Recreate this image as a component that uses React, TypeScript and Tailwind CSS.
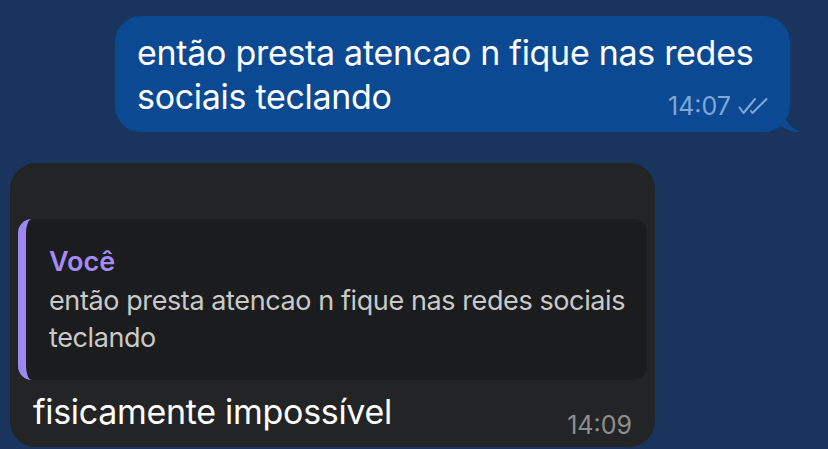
import React from 'react';

function DoubleCheck() {
  return (
    <svg width="30" height="18" viewBox="0 0 30 18" fill="none" stroke="#7fa6d8" strokeWidth="2" strokeLinecap="round" strokeLinejoin="round">
      <path d="M1.5 10.5 L5.5 16 L17 2" />
      <path d="M13 14 L14.5 16 L28.5 2" />
    </svg>
  );
}

export default function App() {
  return (
    <div className="w-[828px] h-[449px] overflow-hidden bg-[#1a355d] font-['Inter','Liberation_Sans',sans-serif] flex flex-col">
      {/* sent message */}
      <div className="flex justify-end pr-[38px] pt-[16px]">
        <div className="relative w-[675px] h-[116px] bg-[#0b4993] rounded-[26px] pl-[22px] pt-[15px]">
          <p className="text-[34px] leading-[44px] text-white tracking-[-0.3px]">
            então presta atencao n fique nas redes<br />sociais teclando
          </p>
          <div className="absolute right-[22px] bottom-[12px] flex items-center gap-[7px]">
            <span className="text-[25px] leading-[28px] text-[#7fa6d8]">14:07</span>
            <DoubleCheck />
          </div>
          <svg className="absolute right-[-15px] bottom-0" width="24" height="26" viewBox="0 0 24 26">
            <path d="M0 0 C2 12 8 22 20 26 C12 26 6 24 0 20 Z" fill="#0b4993" />
          </svg>
        </div>
      </div>

      {/* received message */}
      <div className="pl-[10px] pt-[31px]">
        <div className="w-[645px] h-[284px] bg-[#232425] rounded-[26px] pt-[56px] px-[8px]">
          <div className="h-[161px] bg-[#1b1c1d] rounded-[14px] border-l-[8px] border-[#9d87f0] pl-[23px] pt-[28px]">
            <div className="text-[27px] leading-[30px] font-semibold text-[#a48cf5]">Você</div>
            <p className="mt-[5px] text-[27px] leading-[37px] text-[#c9c9c9] tracking-[-0.4px]">
              então presta atencao n fique nas redes sociais<br />teclando
            </p>
          </div>
          <div className="flex items-end justify-between pl-[15px] pr-[15px] pt-[13px]">
            <span className="text-[34px] leading-[38px] text-white tracking-[-0.3px]">fisicamente impossível</span>
            <span className="text-[25px] leading-[28px] text-[#8e8e8f] mb-[-8px]">14:09</span>
          </div>
        </div>
      </div>
    </div>
  );
}
